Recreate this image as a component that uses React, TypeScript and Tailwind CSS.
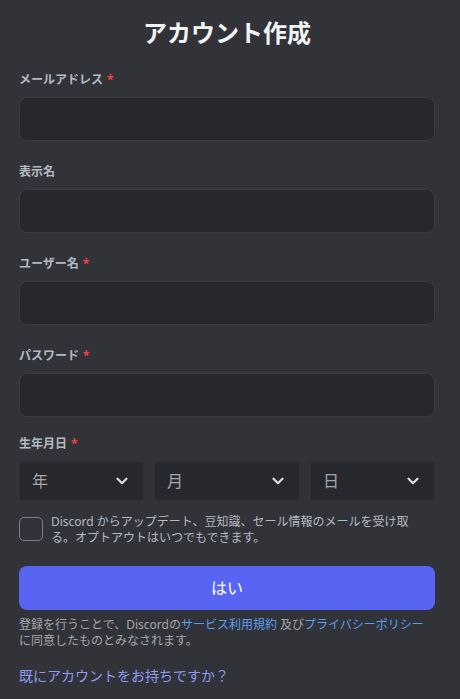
import { ChevronDown } from 'lucide-react'

function Label({ text, required }: { text: string; required?: boolean }) {
  return (
    <div className="mb-[9px] h-4 text-[12px] font-bold leading-4 text-[#b5bac1]">
      {text}
      {required && <span className="ml-1 text-[#f23f42]">*</span>}
    </div>
  )
}

function Field({ label, required, gap = 'mb-[23px]' }: { label: string; required?: boolean; gap?: string }) {
  return (
    <div className={gap}>
      <Label text={label} required={required} />
      <div className="h-11 rounded-lg border border-[#3a3c41] bg-[#27282d]" />
    </div>
  )
}

function DateSelect({ text, width }: { text: string; width: string }) {
  return (
    <div className={`flex h-10 items-center justify-between rounded-[4px] border border-[#2f3136] bg-[#27282d] pl-3 pr-3 ${width}`}>
      <span className="text-[16px] text-[#a3a6ab]">{text}</span>
      <ChevronDown className="h-[18px] w-[18px] text-[#dbdee1]" strokeWidth={3} />
    </div>
  )
}

export default function App() {
  return (
    <div
      className="min-h-[699px] w-[460px] bg-[#323339] pl-[19px] pr-[25px] pt-[18px]"
      style={{ fontFamily: '"Noto Sans", "Noto Sans CJK JP", sans-serif' }}
    >
      <h1 className="mb-6 text-center text-[24px] font-bold leading-[30px] text-[#f2f3f5]">アカウント作成</h1>

      <Field label="メールアドレス" required />
      <Field label="表示名" />
      <Field label="ユーザー名" required />
      <Field label="パスワード" required gap="mb-[19px]" />

      <div>
        <Label text="生年月日" required />
        <div className="flex gap-[10px]">
          <DateSelect text="年" width="w-[125px]" />
          <DateSelect text="月" width="w-[146px]" />
          <DateSelect text="日" width="w-[125px]" />
        </div>
      </div>

      <div className="mt-4 flex items-start gap-2">
        <div className="h-6 w-6 shrink-0 rounded-[5px] border border-[#7c7f85]" />
        <p className="-mt-[3px] text-[12px] leading-4 text-[#b5bac1]">
          Discord からアップデート、豆知識、セール情報のメールを受け取
          <br />
          る。オプトアウトはいつでもできます。
        </p>
      </div>

      <button className="mt-[20px] flex h-11 w-full items-center justify-center rounded-lg bg-[#5865f2] text-[16px] font-normal text-white">
        はい
      </button>

      <p className="mt-[7px] text-[12px] leading-4 text-[#a3a6ab]">
        登録を行うことで、Discordの<span className="text-[#5a9ff0]">サービス利用規約</span> 及び
        <span className="text-[#5a9ff0]">プライバシーポリシー</span>
        <br />
        に同意したものとみなされます。
      </p>

      <div className="mt-[18px] text-[14px] leading-[18px] text-[#8c9cf2]">既にアカウントをお持ちですか？</div>
    </div>
  )
}
